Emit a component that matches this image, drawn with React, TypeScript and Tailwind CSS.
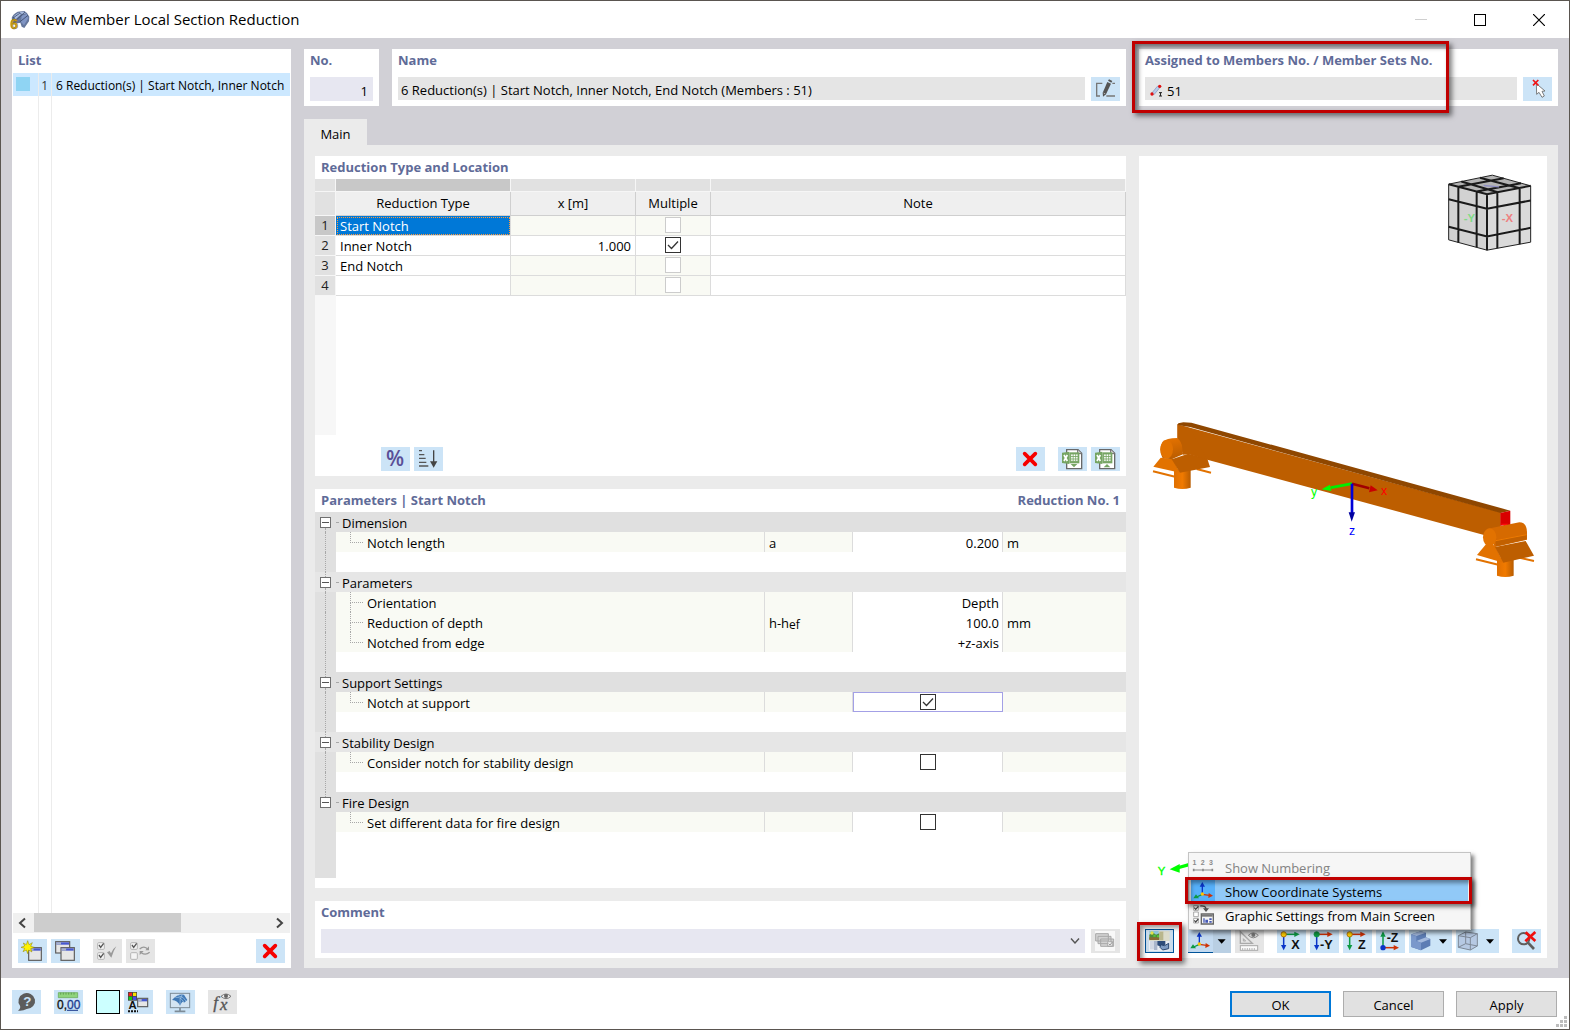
import React, { useState } from "react";

type Kids = { children?: React.ReactNode };

/* ---------- shared controls ---------- */

function Glyph({ children, w = 87, cls = "w-[29px]" }: Kids & { w?: number; cls?: string }) {
  return (
    <svg viewBox={`0 0 ${w} 72`} className={`block h-6 overflow-visible ${cls}`} aria-hidden="true">
      {children}
    </svg>
  );
}

function Tool({ label, off, children }: Kids & { label: string; off?: boolean }) {
  return (
    <button
      type="button"
      aria-label={label}
      disabled={off}
      className={`h-6 w-[29px] shrink-0 ${off ? "bg-[#e5e5e5]" : "bg-[#cce4f7]"}`}
    >
      {children}
    </button>
  );
}

function Tick({ label, on = false, faint = false }: { label: string; on?: boolean; faint?: boolean }) {
  return (
    <span className="relative inline-block size-4 align-top">
      <input
        type="checkbox"
        aria-label={label}
        defaultChecked={on}
        disabled={faint}
        className={`peer block size-4 appearance-none border bg-white ${faint ? "border-[#cccccc]" : "border-[#333333]"}`}
      />
      <svg
        viewBox="0 0 16 16"
        className="pointer-events-none absolute inset-0 hidden size-4 peer-checked:block"
        aria-hidden="true"
      >
        <path d="M3 8l3.5 3.5L13 4.5" fill="none" stroke="#333" strokeWidth="1.3" />
      </svg>
    </span>
  );
}

function Heading({ children }: Kids) {
  return <h2 className="h-[23px] text-[13px] leading-[23px] font-bold text-[#5f6b98]">{children}</h2>;
}

/* ---------- glyphs ---------- */

function RedCross() {
  return (
    <Glyph>
      <path d="M26 20L58 52M58 20L26 52" stroke="#f60000" strokeWidth="11" strokeLinecap="round" />
    </Glyph>
  );
}

function MiniWindow({ x, y, w, h }: { x: number; y: number; w: number; h: number }) {
  return (
    <g>
      <rect x={x} y={y} width={w} height={h} fill="#e6e6e6" stroke="#5c5c5c" strokeWidth="3.5" />
      <rect x={x + 2} y={y + 2} width={w - 4} height="7" fill="#4658cf" />
      <rect x={x + 2} y={y + 2} width={w / 3} height="7" fill="#aab4c8" />
    </g>
  );
}

function MiniCheck({ y, on = true }: { y: number; on?: boolean }) {
  return (
    <g>
      <rect x="14" y={y} width="20" height="20" rx="3" fill="#f4f4f4" stroke="#b5b5b5" strokeWidth="3" />
      {on && <path d={`M18 ${y + 7}l5 7l9 -12`} fill="none" stroke="#555" strokeWidth="4" />}
    </g>
  );
}

function ExcelGlyph({ up }: { up?: boolean }) {
  return (
    <Glyph>
      <path d="M26 8H60L71 19V65H26Z" fill="#fff" stroke="#686868" strokeWidth="4" />
      <path d="M59 8V20H71" fill="#ddd" stroke="#686868" strokeWidth="3" />
      <path d="M34 16H64V49H34Z" fill="#76a563" />
      <path d="M38 21h22v22H38zM38 28.500h22M38 36h22M45.500 21v22M53 21v22" fill="#fff" stroke="#76a563" strokeWidth="2.500" />
      <path d="M12 17L34 14V51L12 48Z" fill="#76a563" />
      <path d="M18 24L28 42M28 24L18 42" stroke="#fff" strokeWidth="5" />
      <path d={up ? "M48 51L58 61H38Z" : "M48 61L58 51H38Z"} fill="#76a563" />
    </Glyph>
  );
}

function AxesGlyph() {
  return (
    <g>
      <path d="M34 46V20" stroke="#0a35c8" strokeWidth="4" />
      <path d="M34 9L42 23H26Z" fill="#0a35c8" />
      <path d="M34 46L55 49" stroke="#cf3206" strokeWidth="4" />
      <path d="M66 50L52 57L53 42Z" fill="#cf3206" />
      <path d="M34 46L17 54" stroke="#0d9a44" strokeWidth="4" />
      <path d="M7 58L15 46L24 58Z" fill="#0d9a44" />
      <circle cx="34" cy="45" r="5" fill="#ffc400" />
    </g>
  );
}

function ViewGlyph({ dot, right, down, text }: { dot: string; right: string; down: string; text: string }) {
  return (
    <Glyph>
      <path d="M20 16H54" stroke={right} strokeWidth="4.500" />
      <path d="M68 16L52 24V8Z" fill={right} />
      <path d="M20 16V48" stroke={down} strokeWidth="4.500" />
      <path d="M20 64L12 48H28Z" fill={down} />
      <circle cx="20" cy="16" r="8" fill={dot === "yellow" ? "#ffd000" : dot} stroke={dot === "yellow" ? "#b26a00" : dot} strokeWidth="2.500" />
      <text x="68" y="60" textAnchor="end" fontSize="38" fontWeight="bold" fontFamily="Liberation Sans, sans-serif" fill="#111">
        {text}
      </text>
    </Glyph>
  );
}

function AppLogo() {
  return (
    <svg viewBox="0 0 60 60" className="size-5 overflow-visible" aria-hidden="true">
      <path d="M8 24Q10 14 26 5L46 3Q56 8 61 20L60 34L46 54L38 50L34 38L14 42Z" fill="#65779c" />
      <path d="M14 19L28 8L36 13L20 28ZM32 6L45 5L51 10L39 13Z" fill="#a9bce0" />
      <path d="M38 17L53 12L58 24L45 46L36 36Z" fill="#8095c4" />
      <path d="M12 24L32 10M22 30L48 6M32 36L57 16" stroke="#3b4a6b" strokeWidth="2.500" />
      <text x="4" y="57" fontSize="42" fontWeight="bold" fontFamily="Liberation Sans, sans-serif" fill="#d6a911" stroke="#7d6512" strokeWidth="1.500">
        6
      </text>
    </svg>
  );
}

/* ---------- top bar ---------- */

function TitleBar() {
  return (
    <header className="flex h-[37px] shrink-0 items-center bg-white pr-px pl-2">
      <AppLogo />
      <h1 className="flex-1 pl-[6px] text-[15px] text-black">New Member Local Section Reduction</h1>
      <button type="button" aria-label="Minimize" disabled className="flex h-9 w-[59px] items-center justify-center">
        <span className="h-px w-3 bg-[#cfcfcf]" />
      </button>
      <button type="button" aria-label="Maximize" className="flex h-9 w-[59px] items-center justify-center">
        <span className="size-3 border border-black" />
      </button>
      <button type="button" aria-label="Close" className="flex h-9 w-[59px] items-center justify-center">
        <svg viewBox="0 0 12 12" className="size-3" aria-hidden="true">
          <path d="M0 0L12 12M12 0L0 12" stroke="#000" strokeWidth="1.200" />
        </svg>
      </button>
    </header>
  );
}

/* ---------- list on the left ---------- */

function ListPanel() {
  return (
    <aside className="flex w-[279px] shrink-0 flex-col bg-white px-px">
      <div className="px-[5px] pb-px">
        <Heading>List</Heading>
      </div>
      <ul className="flex flex-1 flex-col">
        <li className="flex h-[23px] bg-[#cce8ff] text-[12px] leading-[25px]">
          <span className="w-[26px] border-r border-[#ececec] p-1 pl-[3px]">
            <span className="block size-[14px] bg-[#8fd4f3]" />
          </span>
          <span className="w-[13px] border-r border-[#ececec] pr-[3px] text-right text-[#333]">1</span>
          <span className="min-w-0 flex-1 pl-1 whitespace-nowrap">6 Reduction(s) | Start Notch, Inner Notch</span>
        </li>
        <li className="flex flex-1" aria-hidden="true">
          <span className="w-[26px] border-r border-[#ececec]" />
          <span className="w-[13px] border-r border-[#ececec]" />
        </li>
      </ul>
      <div className="flex h-5 bg-[#f0f0f0]">
        <button type="button" aria-label="Scroll left" className="w-[21px]">
          <svg viewBox="0 0 21 20" className="h-5 w-[21px]" aria-hidden="true">
            <path d="M12 5.500L7 10L12 14.500" fill="none" stroke="#444" strokeWidth="2" />
          </svg>
        </button>
        <div className="flex-1">
          <div className="h-[19px] w-[147px] bg-[#cdcdcd]" />
        </div>
        <button type="button" aria-label="Scroll right" className="w-[21px]">
          <svg viewBox="0 0 21 20" className="h-5 w-[21px]" aria-hidden="true">
            <path d="M8 5.500L13 10L8 14.500" fill="none" stroke="#444" strokeWidth="2" />
          </svg>
        </button>
      </div>
      <div className="flex gap-1 px-[5px] pt-[6px] pb-[5px]">
        <Tool label="New">
          <Glyph>
            <MiniWindow x={32} y={26} w={38} h={38} />
            <path d="M29 5L33 17L43 11L38 22L49 25L38 29L42 39L32 33L29 44L25 33L15 38L20 28L9 25L20 21L16 12L25 17Z" fill="#fff200" stroke="#8a8200" strokeWidth="1.500" />
          </Glyph>
        </Tool>
        <Tool label="Copy">
          <Glyph>
            <MiniWindow x={14} y={8} w={42} h={34} />
            <MiniWindow x={30} y={26} w={40} h={38} />
          </Glyph>
        </Tool>
        <span className="w-[5px]" />
        <Tool label="Select all" off>
          <Glyph>
            <MiniCheck y={11} />
            <MiniCheck y={41} />
            <path d="M42 40L50 36L54 43Q60 28 70 22Q61 36 55 56Z" fill="#9a9a9a" />
          </Glyph>
        </Tool>
        <Tool label="Invert selection" off>
          <Glyph>
            <MiniCheck y={11} />
            <MiniCheck y={41} on={false} />
            <path d="M41 30Q54 18 66 31M71 40Q58 50 46 41" fill="none" stroke="#999" strokeWidth="4" />
            <path d="M69 22V34H58ZM41 48V36H53Z" fill="#999" />
          </Glyph>
        </Tool>
        <span className="flex-1" />
        <Tool label="Delete">
          <RedCross />
        </Tool>
      </div>
    </aside>
  );
}

/* ---------- fields above the tab ---------- */

function TopFields() {
  return (
    <div className="flex gap-[13px]">
      <section className="w-[75px] shrink-0 bg-white px-[6px] pb-[5px]">
        <Heading>
          <label htmlFor="no">No.</label>
        </Heading>
        <input id="no" defaultValue="1" className="mt-[5px] block h-6 w-full bg-[#e7e7f1] pt-[3px] pr-[5px] text-right text-[13px]" />
      </section>
      <section className="min-w-0 flex-1 bg-white px-[6px] pb-[5px]">
        <Heading>
          <label htmlFor="name">Name</label>
        </Heading>
        <div className="mt-[5px] flex gap-[6px]">
          <input
            id="name"
            readOnly
            defaultValue="6 Reduction(s) | Start Notch, Inner Notch, End Notch (Members : 51)"
            className="h-[23px] min-w-0 flex-1 bg-[#e5e5e5] px-[3px] pt-[3px] text-[13px]"
          />
          <Tool label="Edit name">
            <Glyph>
              <path d="M34 19H17V57H27M64 19H72M46 57H72" fill="none" stroke="#777" strokeWidth="4" />
              <path d="M49 15L60 20L45 52L36 59L35 47Z" fill="#555" />
              <path d="M51 11L54 7L64 12L61 17Z" fill="#555" />
              <path d="M38 48L43 51" stroke="#ddd" strokeWidth="2" />
            </Glyph>
          </Tool>
        </div>
      </section>
      <section className="relative w-[419px] shrink-0 bg-white px-[6px] pb-[5px]">
        <Heading>
          <label htmlFor="assigned">Assigned to Members No. / Member Sets No.</label>
        </Heading>
        <div className="mt-[5px] flex gap-[6px]">
          <div className="flex h-[23px] min-w-0 flex-1 items-center bg-[#e5e5e5] pl-[5px]">
            <svg viewBox="0 0 39 39" className="mt-1 size-[13px]" aria-hidden="true">
              <path d="M4 29L22 7L31 9L12 32Z" fill="#b8cae8" stroke="#7d93bd" strokeWidth="2" />
              <circle cx="6" cy="30" r="5" fill="#e01010" />
              <circle cx="29" cy="7" r="5" fill="#e01010" />
              <path d="M27 26H36M27 36H36M31.500 26V36" stroke="#222" strokeWidth="3" />
            </svg>
            <input id="assigned" readOnly defaultValue="51" className="h-[23px] min-w-0 flex-1 bg-transparent pt-1 pl-1 text-[13px]" />
          </div>
          <Tool label="Pick in graphics">
            <Glyph>
              <path d="M40 20L41 52L48 46L57 61L64 57L57 43L66 42Z" fill="#fff" stroke="#666" strokeWidth="2.500" />
              <path d="M30 9L46 25M46 9L30 25" stroke="#f01414" strokeWidth="5" />
            </Glyph>
          </Tool>
        </div>
        <div className="pointer-events-none absolute top-[-8px] right-[109px] bottom-[-7px] left-[-7px] border-3 border-[#c00000] shadow-[3px_3px_5px_rgba(0,0,0,0.5),inset_3px_3px_5px_rgba(0,0,0,0.5)]" />
      </section>
    </div>
  );
}

/* ---------- reduction table ---------- */

type Reduction = { type: string; x: string; multiple: boolean; enabled: boolean };

const reductions: Reduction[] = [
  { type: "Start Notch", x: "", multiple: false, enabled: false },
  { type: "Inner Notch", x: "1.000", multiple: true, enabled: true },
  { type: "End Notch", x: "", multiple: false, enabled: false },
  { type: "", x: "", multiple: false, enabled: false },
];

function ReductionPanel() {
  return (
    <section className="bg-white">
      <div className="px-[6px]">
        <Heading>Reduction Type and Location</Heading>
      </div>
      <div className="flex min-h-[256px] flex-col">
        <table className="w-full table-fixed border-separate border-spacing-0 text-[13px]">
          <colgroup>
            <col className="w-[21px]" />
            <col className="w-[175px]" />
            <col className="w-[125px]" />
            <col className="w-[75px]" />
            <col />
          </colgroup>
          <thead>
            <tr className="h-[13px]" aria-hidden="true">
              <td className="border-r border-b border-[#f6f6f6] bg-[#e1e1e1]" />
              <td className="border-r border-b border-[#f6f6f6] bg-[#c8c8c8]" />
              <td className="border-r border-b border-[#f6f6f6] bg-[#e1e1e1]" />
              <td className="border-r border-b border-[#f6f6f6] bg-[#e1e1e1]" />
              <td className="border-r border-b border-[#f6f6f6] bg-[#e1e1e1]" />
            </tr>
            <tr className="h-6">
              <td className="border-r border-b border-[#f6f6f6] bg-[#e1e1e1] p-0" />
              <th className="border-r border-b border-[#cfcfcf] bg-[#efefef] p-0 font-normal">Reduction Type</th>
              <th className="border-r border-b border-[#cfcfcf] bg-[#efefef] p-0 font-normal">x [m]</th>
              <th className="border-r border-b border-[#cfcfcf] bg-[#efefef] p-0 font-normal">Multiple</th>
              <th className="border-r border-b border-[#cfcfcf] bg-[#efefef] p-0 font-normal">Note</th>
            </tr>
          </thead>
          <tbody>
            {reductions.map((r, i) => (
              <tr key={i} className="h-5 leading-[19px]">
                <th
                  className={`border-r border-b border-[#f6f6f6] p-0 text-center font-normal text-[#222] ${i === 0 ? "bg-[#c8c8c8]" : "bg-[#e1e1e1]"}`}
                >
                  {i + 1}
                </th>
                <td
                  className={`border-r border-b border-[#dcdcdc] p-0 ${i === 0 ? "bg-[#0078d7] text-white outline-1 -outline-offset-2 outline-[#ff9a3c] outline-dotted" : ""}`}
                >
                  <div className="h-[19px] pl-1 leading-[21px]">{r.type}</div>
                </td>
                <td className={`border-r border-b border-[#dcdcdc] p-0 text-right ${r.enabled ? "" : "bg-[#f9faf4]"}`}>
                  <div className="h-[19px] pr-1 leading-[21px]">{r.x}</div>
                </td>
                <td className={`border-r border-b border-[#dcdcdc] p-0 text-center ${r.enabled ? "" : "bg-[#f9faf4]"}`}>
                  <div className="h-[19px] pt-px">
                    <Tick label={`Multiple ${i + 1}`} on={r.multiple} faint={!r.enabled} />
                  </div>
                </td>
                <td className="border-r border-b border-[#dcdcdc] p-0" />
              </tr>
            ))}
          </tbody>
        </table>
        <div className="w-[21px] flex-1 bg-[#f7f7f7]" />
      </div>
      <div className="flex gap-1 pt-3 pr-[6px] pb-[5px] pl-[66px]">
        <Tool label="Relative values">
          <Glyph>
            <text x="42" y="58" textAnchor="middle" fontSize="63" fontWeight="600" fontFamily="Open Sans, sans-serif" fill="#5a4f97">
              %
            </text>
          </Glyph>
        </Tool>
        <Tool label="Sort">
          <Glyph>
            <path d="M15 11H24M15 23H31M15 34H35M15 46H37M15 57H43" stroke="#555" strokeWidth="4" />
            <path d="M59 10V48" stroke="#444" strokeWidth="4" />
            <path d="M59 62L48 43H70Z" fill="#444" />
          </Glyph>
        </Tool>
        <span className="flex-1" />
        <Tool label="Delete reductions">
          <RedCross />
        </Tool>
        <span className="w-[5px]" />
        <Tool label="Import from Excel">
          <ExcelGlyph />
        </Tool>
        <Tool label="Export to Excel">
          <ExcelGlyph up />
        </Tool>
      </div>
    </section>
  );
}

/* ---------- parameter tree ---------- */

type Param = { label: string; symbol?: React.ReactNode; value?: string; unit?: string; check?: boolean; options?: string[]; active?: boolean };
type Group = { title: string; rows: Param[] };

const groups: Group[] = [
  { title: "Dimension", rows: [{ label: "Notch length", symbol: "a", value: "0.200", unit: "m" }] },
  {
    title: "Parameters",
    rows: [
      { label: "Orientation", options: ["Depth", "Width"] },
      {
        label: "Reduction of depth",
        symbol: (
          <>
            h-h<span className="relative top-px text-[12px]">ef</span>
          </>
        ),
        value: "100.0",
        unit: "mm",
      },
      { label: "Notched from edge", options: ["+z-axis", "-z-axis"] },
    ],
  },
  { title: "Support Settings", rows: [{ label: "Notch at support", check: true, active: true }] },
  { title: "Stability Design", rows: [{ label: "Consider notch for stability design", check: false }] },
  { title: "Fire Design", rows: [{ label: "Set different data for fire design", check: false }] },
];

function ValueCell({ row }: { row: Param }) {
  if (row.check !== undefined) {
    return (
      <div className={`h-5 text-center ${row.active ? "border border-r-0 border-[#a3a0e6] pt-px" : "pt-[2px] pl-[2px]"}`}>
        <Tick label={row.label} on={row.check} />
      </div>
    );
  }
  if (row.options) {
    return (
      <select aria-label={row.label} className="block h-5 w-full appearance-none bg-transparent pt-[2px] pr-[3px] text-right text-[13px] leading-[18px] [text-align-last:right]">
        {row.options.map((o) => (
          <option key={o}>{o}</option>
        ))}
      </select>
    );
  }
  return (
    <input aria-label={row.label} defaultValue={row.value} className="block h-5 w-full bg-transparent pt-[2px] pr-[3px] text-right text-[13px]" />
  );
}

function GroupRows({ group, index, last }: { group: Group; index: number; last: boolean }) {
  const [open, setOpen] = useState(true);
  const shade = index % 2 === 0 ? "bg-[#e0e0e0]" : "bg-[#e6e6e6]";
  const rail = (
    <td className="bg-[#e0e0e0] p-0">
      <div className={`ml-[10px] h-5 border-l border-dotted ${last ? "border-transparent" : "border-[#a8a8a8]"}`} />
    </td>
  );
  return (
    <>
      <tr className={`h-5 ${shade}`}>
        <td className="p-0">
          <div className="flex h-5 flex-col items-center">
            <span className={`h-[5px] w-px border-l border-dotted ${index === 0 ? "border-transparent" : "border-[#a8a8a8]"}`} />
            <button
              type="button"
              aria-label={`Toggle ${group.title}`}
              onClick={() => setOpen(!open)}
              className="flex size-[11px] items-center justify-center border border-[#707070] bg-white"
            >
              <span className="h-px w-[7px] bg-[#555]" />
            </button>
            <span className={`w-px flex-1 border-l border-dotted ${last ? "border-transparent" : "border-[#a8a8a8]"}`} />
          </div>
        </td>
        <th colSpan={4} className="p-0 text-left font-normal">
          <div className="flex h-5 items-center leading-[22px]">
            <span className="mr-1 w-[2px] border-t border-dotted border-[#a8a8a8]" />
            <span className="pt-[2px]">{group.title}</span>
          </div>
        </th>
      </tr>
      {open &&
        group.rows.map((row, i) => (
          <tr key={row.label} className="h-5">
            {rail}
            <td className="border-r border-[#dcdcdc] bg-[#f9faf4] p-0">
              <div className="flex h-5 pl-[14px]">
                <span className="flex w-[13px] flex-col">
                  <span className="h-[11px] border-b border-l border-dotted border-[#a8a8a8]" />
                  {i < group.rows.length - 1 && <span className="flex-1 border-l border-dotted border-[#a8a8a8]" />}
                </span>
                <span className="pl-1 leading-[23px]">{row.label}</span>
              </div>
            </td>
            <td className="border-r border-[#dcdcdc] bg-[#f9faf4] p-0">
              <div className="h-5 pl-1 leading-[23px] whitespace-nowrap">{row.symbol}</div>
            </td>
            <td className={`border-r bg-white p-0 ${row.active ? "border-[#a3a0e6]" : "border-[#dcdcdc]"}`}>
              <ValueCell row={row} />
            </td>
            <td className="bg-[#f9faf4] p-0">
              <div className="h-5 pl-1 leading-[23px]">{row.unit}</div>
            </td>
          </tr>
        ))}
      {!last && (
        <tr className="h-5">
          {rail}
          <td colSpan={4} className="p-0" />
        </tr>
      )}
    </>
  );
}

function ParameterPanel() {
  return (
    <section className="flex flex-1 flex-col bg-white pb-[10px]">
      <div className="flex justify-between px-[6px]">
        <Heading>Parameters | Start Notch</Heading>
        <Heading>Reduction No. 1</Heading>
      </div>
      <table className="w-full table-fixed border-separate border-spacing-0 text-[13px]">
        <colgroup>
          <col className="w-[21px]" />
          <col />
          <col className="w-[88px]" />
          <col className="w-[150px]" />
          <col className="w-[123px]" />
        </colgroup>
        <tbody>
          {groups.map((g, i) => (
            <GroupRows key={g.title} group={g} index={i} last={i === groups.length - 1} />
          ))}
        </tbody>
      </table>
      <div className="w-[21px] flex-1 bg-[#e0e0e0]" />
    </section>
  );
}

function CommentPanel() {
  return (
    <section className="bg-white px-[6px] pb-[5px]">
      <Heading>
        <label htmlFor="comment">Comment</label>
      </Heading>
      <div className="mt-[5px] flex gap-[6px]">
        <div className="relative min-w-0 flex-1">
          <select id="comment" className="block h-6 w-full appearance-none bg-[#e7e7f1] px-1 text-[13px]">
            <option value="" />
          </select>
          <svg viewBox="0 0 10 6" className="pointer-events-none absolute top-[9px] right-[5px] h-[6px] w-[10px]" aria-hidden="true">
            <path d="M1 .5L5 5L9 .5" fill="none" stroke="#555" strokeWidth="1.400" />
          </svg>
        </div>
        <Tool label="Comment templates" off>
          <Glyph>
            <rect x="12" y="6" width="60" height="60" fill="#f8f8f8" />
            <path d="M14 14H52V36H14ZM21 22H60V44H21ZM29 30H68V52H29Z" fill="#d2d2d2" stroke="#a8a8a8" strokeWidth="3" />
            <path d="M50 38H64V51H50Z" fill="#eee" stroke="#999" strokeWidth="2" />
            <path d="M53 44l4 4l8 -10" fill="none" stroke="#999" strokeWidth="3" />
          </Glyph>
        </Tool>
      </div>
    </section>
  );
}

/* ---------- 3D preview ---------- */

function OrientationCube() {
  return (
    <svg viewBox="1102 520 258 236" className="absolute top-[17px] right-[14px] h-[79px] w-[86px]" aria-label="View cube">
      <path d="M1107 553L1238 526L1353 558L1222 583Z" fill="#b4b4b4" />
      <path d="M1107 553L1222 583V751L1107 720Z" fill="#d2d2d2" />
      <path d="M1222 583L1353 558V727L1222 751Z" fill="#dadada" />
      <path d="M1107 553L1238 526L1353 558V727L1222 751L1107 720Z" fill="none" stroke="#222" strokeWidth="3" />
      <path
        d="M1107 553L1222 583L1353 558M1222 583V751M1136 561V728M1191 575V742M1253 577V745M1320 565V733M1107 598L1222 627L1353 602M1107 681L1222 710L1353 684M1145 545L1254 577M1201 534L1320 565M1136 561L1272 535M1191 575L1324 550"
        fill="none"
        stroke="#1a1a1a"
        strokeWidth="6"
      />
      <path d="M1212 557L1258 561" stroke="#8f8fc4" strokeWidth="4" />
      <g fontSize="34" fontWeight="bold" fontFamily="Liberation Sans, sans-serif">
        <text x="1152" y="668" fill="#7fdc85">
          -Y
        </text>
        <text x="1266" y="668" fill="#ee8080">
          -X
        </text>
      </g>
    </svg>
  );
}

function BeamModel() {
  return (
    <svg viewBox="0 0 1224 500" className="absolute top-[261px] left-0 h-auto w-full" aria-label="Beam with notches">
      <g transform="translate(-27 -50)">
        <defs>
          <linearGradient id="leg" x1="0" x2="1">
            <stop offset="0" stopColor="#df6f00" />
            <stop offset="0.5" stopColor="#f07a00" />
            <stop offset="1" stopColor="#b85c00" />
          </linearGradient>
          <linearGradient id="roll" x1="0" y1="0" x2="0.2" y2="1">
            <stop offset="0" stopColor="#e87400" />
            <stop offset="1" stopColor="#bd5e00" />
          </linearGradient>
        </defs>
        <path d="M142 72L1112 336V404H1062L232 178L142 150Z" fill="#bd5e00" />
        <path d="M142 74L145 69L160 66L184 67L1141 331L1112 338L180 80Z" fill="#8f4700" />
        <path d="M1111 338L1141 331V374L1111 376Z" fill="#d90000" />
        <path d="M1111 370H1135L1125 378Z" fill="#ff0d0d" />

        <path d="M69 213L150 233M200 206L243 217" stroke="#e27200" strokeWidth="6" />
        <path d="M132 208H182V262Q157 270 132 262Z" fill="url(#leg)" />
        <path d="M92 172L70 199L150 217L128 175Z" fill="#e27200" />
        <path d="M125 177L175 160L232 175L240 200L150 217Z" fill="#bd5e00" />
        <path d="M98 124Q108 114 142 113Q158 118 159 162L125 177L97 172Q84 145 98 124Z" fill="url(#roll)" />
        <ellipse cx="110" cy="147" rx="19" ry="28" fill="#e27200" />
        <path d="M143 74L180 84L232 178L178 162L159 163Q160 128 143 114Z" fill="#bd5e00" />

        <path d="M1038 477L1120 497M1160 470L1212 482" stroke="#e27200" strokeWidth="6" />
        <path d="M1101 472H1151V526Q1126 534 1101 526Z" fill="url(#leg)" />
        <path d="M1068 432L1041 464L1120 487L1095 435Z" fill="#e27200" />
        <path d="M1095 440L1187 422L1212 466L1120 487Z" fill="#bd5e00" />
        <path d="M1070 386L1168 366Q1190 366 1191 395V418L1095 440Z" fill="#d66a00" />
        <path d="M1096 420L1190 402V417L1098 438Z" fill="#c26000" />
        <path d="M1097 421L1190 403" stroke="#ee7a00" strokeWidth="3" />
        <ellipse cx="1079" cy="411" rx="20" ry="27" fill="#e27200" />

        <path d="M666 250L603 262" stroke="#00ee00" strokeWidth="8" />
        <path d="M575 267L600 253L604 272Z" fill="#00ff00" />
        <path d="M666 250L718 264" stroke="#a00000" strokeWidth="8" />
        <path d="M743 270L717 276L722 255Z" fill="#c80000" />
        <path d="M666 250V340" stroke="#0000d8" strokeWidth="8" />
        <path d="M665 364L656 336H675Z" fill="#0000a0" />
        <g fontSize="37" fontFamily="Liberation Sans, sans-serif">
          <text x="543" y="288" fill="#00ff00">
            y
          </text>
          <text x="753" y="284" fill="#ff0000">
            x
          </text>
          <text x="657" y="405" fill="#0000ff">
            z
          </text>
        </g>
      </g>
    </svg>
  );
}

function DropArrow({ x }: { x: number }) {
  return <path d={`M${x - 12} 31H${x + 12}L${x} 44Z`} fill="#000" />;
}

function ContextMenu() {
  return (
    <div
      role="menu"
      className="absolute bottom-[28px] left-[49px] flex w-[283px] flex-col border border-[#c4c4c4] bg-[#f6f6f6] p-[2px] text-[13px] shadow-[3px_3px_4px_rgba(0,0,0,0.5)]"
    >
      <button type="button" role="menuitem" disabled className="flex h-6 items-center text-[#838383]">
        <svg viewBox="0 0 72 72" className="size-6" aria-hidden="true">
          <g fontSize="21" fontWeight="bold" fontFamily="Liberation Sans, sans-serif" fill="#8a8a8a" textAnchor="middle">
            <text x="10" y="30">
              1
            </text>
            <text x="35" y="30">
              2
            </text>
            <text x="60" y="30">
              3
            </text>
          </g>
          <path d="M8 45H64" stroke="#8a8a8a" strokeWidth="3" />
          <path d="M8 41v8M36 41v8M64 41v8" stroke="#8a8a8a" strokeWidth="5" />
        </svg>
        <span className="pt-[3px] pl-[10px]">Show Numbering</span>
      </button>
      <button type="button" role="menuitem" className="relative flex h-6 items-center bg-[#91c9f7]">
        <svg viewBox="0 0 72 72" className="size-6 bg-[#56b0fa]" aria-hidden="true">
          <AxesGlyph />
        </svg>
        <span className="pt-[3px] pl-[10px]">Show Coordinate Systems</span>
        <span className="pointer-events-none absolute -top-[2px] -right-[4px] -bottom-px -left-[6px] border-3 border-[#c00000] shadow-[3px_3px_4px_rgba(0,0,0,0.5),inset_3px_3px_4px_rgba(0,0,0,0.4)]" />
      </button>
      <button type="button" role="menuitem" className="flex h-6 items-center">
        <svg viewBox="0 0 72 72" className="size-6" aria-hidden="true">
          <path d="M8 8H22V22H8ZM8 27H22V41H8ZM8 46H22V60H8Z" fill="#fff" stroke="#999" strokeWidth="2.500" />
          <path d="M10 14l4 5l8 -9M10 52l4 5l8 -9" fill="none" stroke="#444" strokeWidth="3.500" />
          <path d="M28 9Q44 7 45 18" fill="none" stroke="#555" strokeWidth="4" />
          <path d="M36 16H54L45 27Z" fill="#555" />
          <path d="M31 33H67V63H31Z" fill="#f4f4f4" stroke="#666" strokeWidth="4" />
          <path d="M33 35H65V41H33Z" fill="#777" />
          <path d="M37 46h4v13h-4zM43 50h8v9h-8zM55 46h7v5h-7zM55 54h7v5h-7z" fill="#4558b5" />
        </svg>
        <span className="pt-[3px] pl-[10px]">Graphic Settings from Main Screen</span>
      </button>
    </div>
  );
}

function PreviewToolbar() {
  return (
    <div className="flex h-6 gap-1 px-[6px]">
      <div className="relative">
        <button type="button" aria-label="Menu of display settings" className="block h-6 w-[29px] border border-[#00549a] bg-[#c9dcec]">
          <svg viewBox="0 0 81 66" className="h-[22px] w-[27px]" aria-hidden="true">
            <path d="M9 3H71V33H9Z" fill="#dcdccb" />
            <path d="M9 33H71V63H9Z" fill="#e9edf3" />
            <path d="M10 3H38V16H10Z" fill="#8fc7dc" />
            <path d="M10 14L22 8L30 14L40 10V28H10Z" fill="#4f8a3c" />
            <path d="M10 22H40V30H10Z" fill="#8a6a34" />
            <circle cx="18" cy="9" r="5" fill="#e3e24a" />
            <path d="M22 14h7v6h-7zM33 16h6v6h-6z" fill="#57c43a" />
            <path d="M40 5H52V31H40Z" fill="#b9b78d" />
            <path d="M12 33H24V58H12Z" fill="#d3d9e4" />
            <path d="M24 33H34V60H24Z" fill="#aab6cb" />
            <path d="M34 33H58V44L48 52L34 46Z" fill="#2f4d7a" />
            <path d="M44 44L56 47L68 40V56L50 60L42 52Z" fill="#7f9cc4" stroke="#29466f" strokeWidth="3" />
          </svg>
        </button>
        <span className="pointer-events-none absolute -top-[7px] -right-[8px] -bottom-[8px] -left-[8px] border-3 border-[#c00000] shadow-[3px_3px_5px_rgba(0,0,0,0.5),inset_3px_3px_4px_rgba(0,0,0,0.4)]" />
      </div>
      <span className="w-[6px]" />
      <button type="button" aria-label="Coordinate systems" className="h-6 w-[43px] shrink-0 bg-[#b9cfe3]">
        <Glyph w={129} cls="w-[43px]">
          <path d="M0 0H75V70H0Z" fill="#c3daf0" />
          <path d="M0 70.500H75" stroke="#00549a" strokeWidth="3" />
          <AxesGlyph />
          <DropArrow x={101} />
        </Glyph>
      </button>
      <Tool label="Dimensions" off>
        <Glyph>
          <path d="M16 8V43H52Z" fill="none" stroke="#aaa" strokeWidth="4" />
          <path d="M25 29V36H32Z" fill="none" stroke="#aaa" strokeWidth="3" />
          <rect x="16" y="50" width="52" height="14" fill="#fafafa" stroke="#aaa" strokeWidth="3" />
          <path d="M23 57v6M30 57v6M37 57v6M44 57v6M51 57v6M58 57v6" stroke="#aaa" strokeWidth="2.500" />
          <path d="M40 19Q55 4 70 19Q55 34 40 19Z" fill="#ddd" stroke="#8a8a8a" strokeWidth="3" />
          <circle cx="55" cy="18" r="6" fill="#777" />
        </Glyph>
      </Tool>
      <span className="w-[5px]" />
      <Tool label="View in X">
        <ViewGlyph dot="yellow" right="#0d9a44" down="#0a35c8" text="X" />
      </Tool>
      <Tool label="View against Y">
        <ViewGlyph dot="#0d9a44" right="#cf3206" down="#0a35c8" text="-Y" />
      </Tool>
      <Tool label="View in Z">
        <ViewGlyph dot="yellow" right="#cf3206" down="#0d9a44" text="Z" />
      </Tool>
      <Tool label="View against Z">
        <Glyph>
          <path d="M21 56V22" stroke="#0d9a44" strokeWidth="4.500" />
          <path d="M21 7L29 23H13Z" fill="#0d9a44" />
          <path d="M21 56H54" stroke="#cf3206" strokeWidth="4.500" />
          <path d="M69 56L53 64V48Z" fill="#cf3206" />
          <circle cx="21" cy="56" r="8" fill="#0a35c8" />
          <text x="67" y="38" textAnchor="end" fontSize="37" fontWeight="bold" fontFamily="Liberation Sans, sans-serif" fill="#111">
            -Z
          </text>
        </Glyph>
      </Tool>
      <button type="button" aria-label="Display mode" className="h-6 w-[43px] shrink-0 bg-[#cce4f7]">
        <Glyph w={129} cls="w-[43px]">
          <path d="M7 16L35 7L51 11V25L64 30V50L36 64L7 54Z" fill="#5d7db4" />
          <path d="M7 16L35 7L51 11L22 21ZM22 36L51 25L64 30L36 41Z" fill="#a3b9dd" />
          <path d="M7 16L22 21V37L36 41V64L7 54Z" fill="#7a98cb" />
          <DropArrow x={102} />
        </Glyph>
      </button>
      <button type="button" aria-label="Box view" className="h-6 w-[43px] shrink-0 bg-[#cce4f7]">
        <Glyph w={129} cls="w-[43px]">
          <path d="M7 20L29 9L64 14V51L43 63L7 55Z" fill="#b6c9e3" stroke="#7d8896" strokeWidth="3" />
          <path d="M7 20L43 26L64 14M43 26V63M29 9V44L7 55M29 44L64 51" fill="none" stroke="#7d8896" strokeWidth="3" />
          <DropArrow x={102} />
        </Glyph>
      </button>
      <span className="flex-1" />
      <Tool label="Reset view">
        <Glyph>
          <path d="M48 41L66 60" stroke="#5e5e5e" strokeWidth="8" />
          <circle cx="35" cy="29" r="17" fill="none" stroke="#5e5e5e" strokeWidth="6" />
          <path d="M41 10L70 36M70 9L40 37" stroke="#f01010" strokeWidth="8" />
        </Glyph>
      </Tool>
    </div>
  );
}

function PreviewPanel() {
  return (
    <section className="relative flex w-[408px] shrink-0 flex-col bg-white pb-[5px]">
      <div className="flex-1">
        <OrientationCube />
        <BeamModel />
      </div>
      <svg viewBox="0 0 96 42" className="absolute bottom-[82px] left-[18px] h-[14px] w-8 overflow-visible" aria-label="Global Y axis">
        <path d="M96 8L60 18" stroke="#00ff00" strokeWidth="10" />
        <path d="M38 22L68 6V32Z" fill="#00ff00" />
        <text x="2" y="38" fontSize="34" fontFamily="Liberation Sans, sans-serif" fill="#00ff00" stroke="#00ff00">
          Y
        </text>
      </svg>
      <PreviewToolbar />
      <ContextMenu />
    </section>
  );
}

/* ---------- footer ---------- */

function Footer() {
  return (
    <footer className="relative flex h-[51px] shrink-0 items-start bg-white pt-3 pr-3 pl-[11px]">
      <div className="flex flex-1 gap-[13px]">
        <Tool label="Help">
          <Glyph>
            <path d="M18 62Q27 55 24 47A25 24 0 1 1 44 57Q32 64 18 62Z" fill="#5c5c5c" />
            <text x="46" y="47" textAnchor="middle" fontSize="40" fontWeight="bold" fontFamily="Liberation Sans, sans-serif" fill="#cce4f7">
              ?
            </text>
          </Glyph>
        </Tool>
        <Tool label="Units">
          <Glyph>
            <path d="M13 8H71V23H13Z" fill="#8fd47c" stroke="#5fa34d" strokeWidth="2" />
            <path d="M20 8v6M28 8v6M36 8v6M44 8v6M52 8v6M60 8v6" stroke="#4f8a40" strokeWidth="2" />
            <text x="9" y="56" fontSize="36" fontFamily="Liberation Sans, sans-serif" fill="#111" stroke="#111" strokeWidth="1">
              0,
              <tspan fill="#1d3b8f" stroke="#1d3b8f">
                00
              </tspan>
            </text>
            <path d="M39 61H72" stroke="#1d3b8f" strokeWidth="3" />
          </Glyph>
        </Tool>
        <div className="flex gap-1">
          <button type="button" aria-label="Color" className="size-6 border border-black bg-[#ccffff]" />
          <Tool label="Color settings">
            <Glyph>
              <path d="M12 6H39V32H12Z" fill="#444" />
              <path d="M14 8H24V18H14Z" fill="#f02020" />
              <path d="M27 8H37V18H27Z" fill="#f5e000" />
              <path d="M14 20H24V30H14Z" fill="#14c814" />
              <path d="M27 20H37V30H27Z" fill="#4a4ae8" />
              <text x="26" y="58" textAnchor="middle" fontSize="34" fontWeight="bold" fontFamily="Liberation Sans, sans-serif" fill="#111">
                A
              </text>
              <path d="M12 64H42" stroke="#111" strokeWidth="6" strokeDasharray="6 3" />
              <MiniWindow x={41} y={25} w={30} h={25} />
            </Glyph>
          </Tool>
        </div>
        <Tool label="Display">
          <Glyph>
            <rect x="13" y="10" width="58" height="43" fill="#d3e4f2" stroke="#7d8b97" strokeWidth="3" />
            <path d="M42 54V62M26 64H58" stroke="#7d8b97" strokeWidth="5" />
            <path d="M18 30Q34 10 54 14L64 30L54 38Q50 30 42 47Q36 32 18 30Z" fill="#3f78b5" />
            <path d="M28 22Q46 20 54 38M36 17Q54 20 60 33M42 45Q40 26 48 15" fill="none" stroke="#a9cdec" strokeWidth="2" />
          </Glyph>
        </Tool>
        <Tool label="Formula" off>
          <Glyph>
            <g fontStyle="italic" fontFamily="Liberation Serif, serif" fill="#555" stroke="#555">
              <text x="16" y="54" fontSize="52">
                f
              </text>
              <text x="36" y="60" fontSize="50">
                x
              </text>
            </g>
            <path d="M39 19Q54 5 69 19Q54 33 39 19Z" fill="#eee" stroke="#777" strokeWidth="3" />
            <circle cx="54" cy="18" r="6" fill="#666" />
          </Glyph>
        </Tool>
      </div>
      <div className="flex gap-3 pt-px text-[13px]">
        <button type="button" className="h-[26px] w-[101px] border-2 border-[#0078d7] bg-[#e1e1e1] pt-[3px]">
          OK
        </button>
        <button type="button" className="h-[26px] w-[101px] border border-[#adadad] bg-[#e1e1e1] pt-[3px]">
          Cancel
        </button>
        <button type="button" className="h-[26px] w-[101px] border border-[#adadad] bg-[#e1e1e1] pt-[3px]">
          Apply
        </button>
      </div>
      <svg viewBox="0 0 11 11" className="absolute right-[2px] bottom-[2px] size-[11px]" aria-hidden="true">
        <path d="M8 0h3v3h-3zM8 4h3v3h-3zM8 8h3v3h-3zM4 4h3v3h-3zM4 8h3v3h-3zM0 8h3v3h-3z" fill="#bdbdbd" />
      </svg>
    </footer>
  );
}

/* ---------- dialog ---------- */

export default function App() {
  return (
    <div className="flex min-h-screen flex-col border border-[#5a5550] bg-[#d1d0d6] font-['Open_Sans',sans-serif] text-[13px] text-black">
      <TitleBar />
      <main className="flex flex-1 gap-[13px] px-[11px] pt-[11px] pb-[10px]">
        <ListPanel />
        <div className="flex min-w-0 flex-1 flex-col">
          <TopFields />
          <div role="tablist" className="mt-[13px] flex">
            <button type="button" role="tab" aria-selected="true" className="h-[26px] w-[63px] bg-[#ebebeb] pt-[5px]">
              Main
            </button>
          </div>
          <div className="flex flex-1 gap-[13px] bg-[#ebebeb] px-[11px] pt-[11px] pb-[10px]">
            <div className="flex min-w-0 flex-1 flex-col gap-[13px]">
              <ReductionPanel />
              <ParameterPanel />
              <CommentPanel />
            </div>
            <PreviewPanel />
          </div>
        </div>
      </main>
      <Footer />
    </div>
  );
}
